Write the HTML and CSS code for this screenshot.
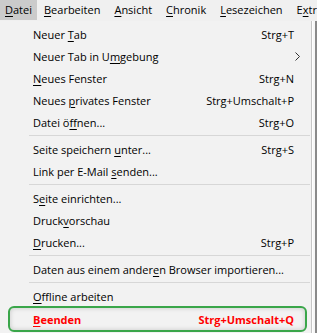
FILE: index.html
```html
<!DOCTYPE html>
<html lang="de">
<head>
  <meta charset="UTF-8">
  <meta name="viewport" content="width=device-width, initial-scale=1.0">
  <title>Datei-Menü</title>
  <link rel="stylesheet" href="styles.css">
</head>
<body>
  <div class="menubar">
    <span class="menubar-item active"><u>D</u>atei</span>
    <span class="menubar-item"><u>B</u>earbeiten</span>
    <span class="menubar-item"><u>A</u>nsicht</span>
    <span class="menubar-item"><u>C</u>hronik</span>
    <span class="menubar-item"><u>L</u>esezeichen</span>
    <span class="menubar-item">E<u>x</u>tras</span>
  </div>

  <div class="window">
    <div class="dropdown">
      <div class="item"><span class="label">Neuer <u>T</u>ab</span><span class="shortcut">Strg+T</span></div>
      <div class="item"><span class="label">Neuer Tab in U<u>m</u>gebung</span><span class="submenu">
        <svg width="5" height="9" viewBox="0 0 5 9"><path d="M0.5 0.5 L4.5 4.5 L0.5 8.5" fill="none" stroke="#333" stroke-width="1"/></svg>
      </span></div>
      <div class="item"><span class="label"><u>N</u>eues Fenster</span><span class="shortcut">Strg+N</span></div>
      <div class="item"><span class="label">Neues <u>p</u>rivates Fenster</span><span class="shortcut">Strg+Umschalt+P</span></div>
      <div class="item"><span class="label">Datei ö<u>f</u>fnen...</span><span class="shortcut">Strg+O</span></div>
      <div class="sep"></div>
      <div class="item"><span class="label">Seite speichern <u>u</u>nter...</span><span class="shortcut">Strg+S</span></div>
      <div class="item"><span class="label">Link per E-Mail <u>s</u>enden...</span></div>
      <div class="sep"></div>
      <div class="item"><span class="label">S<u>e</u>ite einrichten...</span></div>
      <div class="item"><span class="label">Druck<u>v</u>orschau</span></div>
      <div class="item"><span class="label"><u>D</u>rucken...</span><span class="shortcut">Strg+P</span></div>
      <div class="sep"></div>
      <div class="item"><span class="label">Daten aus einem ander<u>e</u>n Browser importieren...</span></div>
      <div class="sep"></div>
      <div class="item"><span class="label"><u>O</u>ffline arbeiten</span></div>
      <div class="item quit"><span class="label"><u>B</u>eenden</span><span class="shortcut">Strg+Umschalt+Q</span></div>
    </div>
    <div class="side"></div>
  </div>
</body>
</html>
```

FILE: styles.css
```css
body {
  margin: 0;
  width: 317px;
  height: 333px;
  overflow: hidden;
  background-color: #f0f0f0;
  font-family: "Open Sans", "Noto Sans", sans-serif;
  font-size: 11px;
  color: #000;
}
u {
  text-underline-offset: 2px;
}
.menubar {
  display: flex;
  height: 21px;
  background-color: #f0f0f0;
  overflow: hidden;
  white-space: nowrap;
}
.menubar-item {
  padding: 0 7px;
  line-height: 20px;
  height: 20px;
}
.menubar-item.active {
  padding: 0 5px;
  background-color: #cbcbcb;
}
.window {
  display: flex;
}
.dropdown {
  width: 313px;
  padding: 2px 0;
  background-color: #f2f2f2;
  border-right: 1px solid #c6c6c6;
  box-sizing: border-box;
}
.side {
  width: 4px;
  background-color: #f7f7f7;
  border-left: 1px solid #fff;
  box-shadow: inset -2px 0 0 #8a8a8a;
}
.item {
  display: flex;
  align-items: center;
  justify-content: space-between;
  height: 22px;
  padding: 0 17px 0 33px;
  white-space: nowrap;
}
.shortcut {
  text-align: right;
}
.submenu {
  display: flex;
  margin-right: -6px;
}
.sep {
  height: 1px;
  margin: 2px 1px 2px 29px;
  background-color: #d7d7d7;
}
.quit {
  height: 26px;
  margin: -1px 4px 0 8px;
  padding: 0 11px 0 23px;
  border: 2px solid #3aa64a;
  border-radius: 6px;
  box-sizing: border-box;
  box-shadow: inset 0 0 5px rgba(0, 0, 0, 0.18);
  color: #ff0000;
  font-weight: bold;
}
```
